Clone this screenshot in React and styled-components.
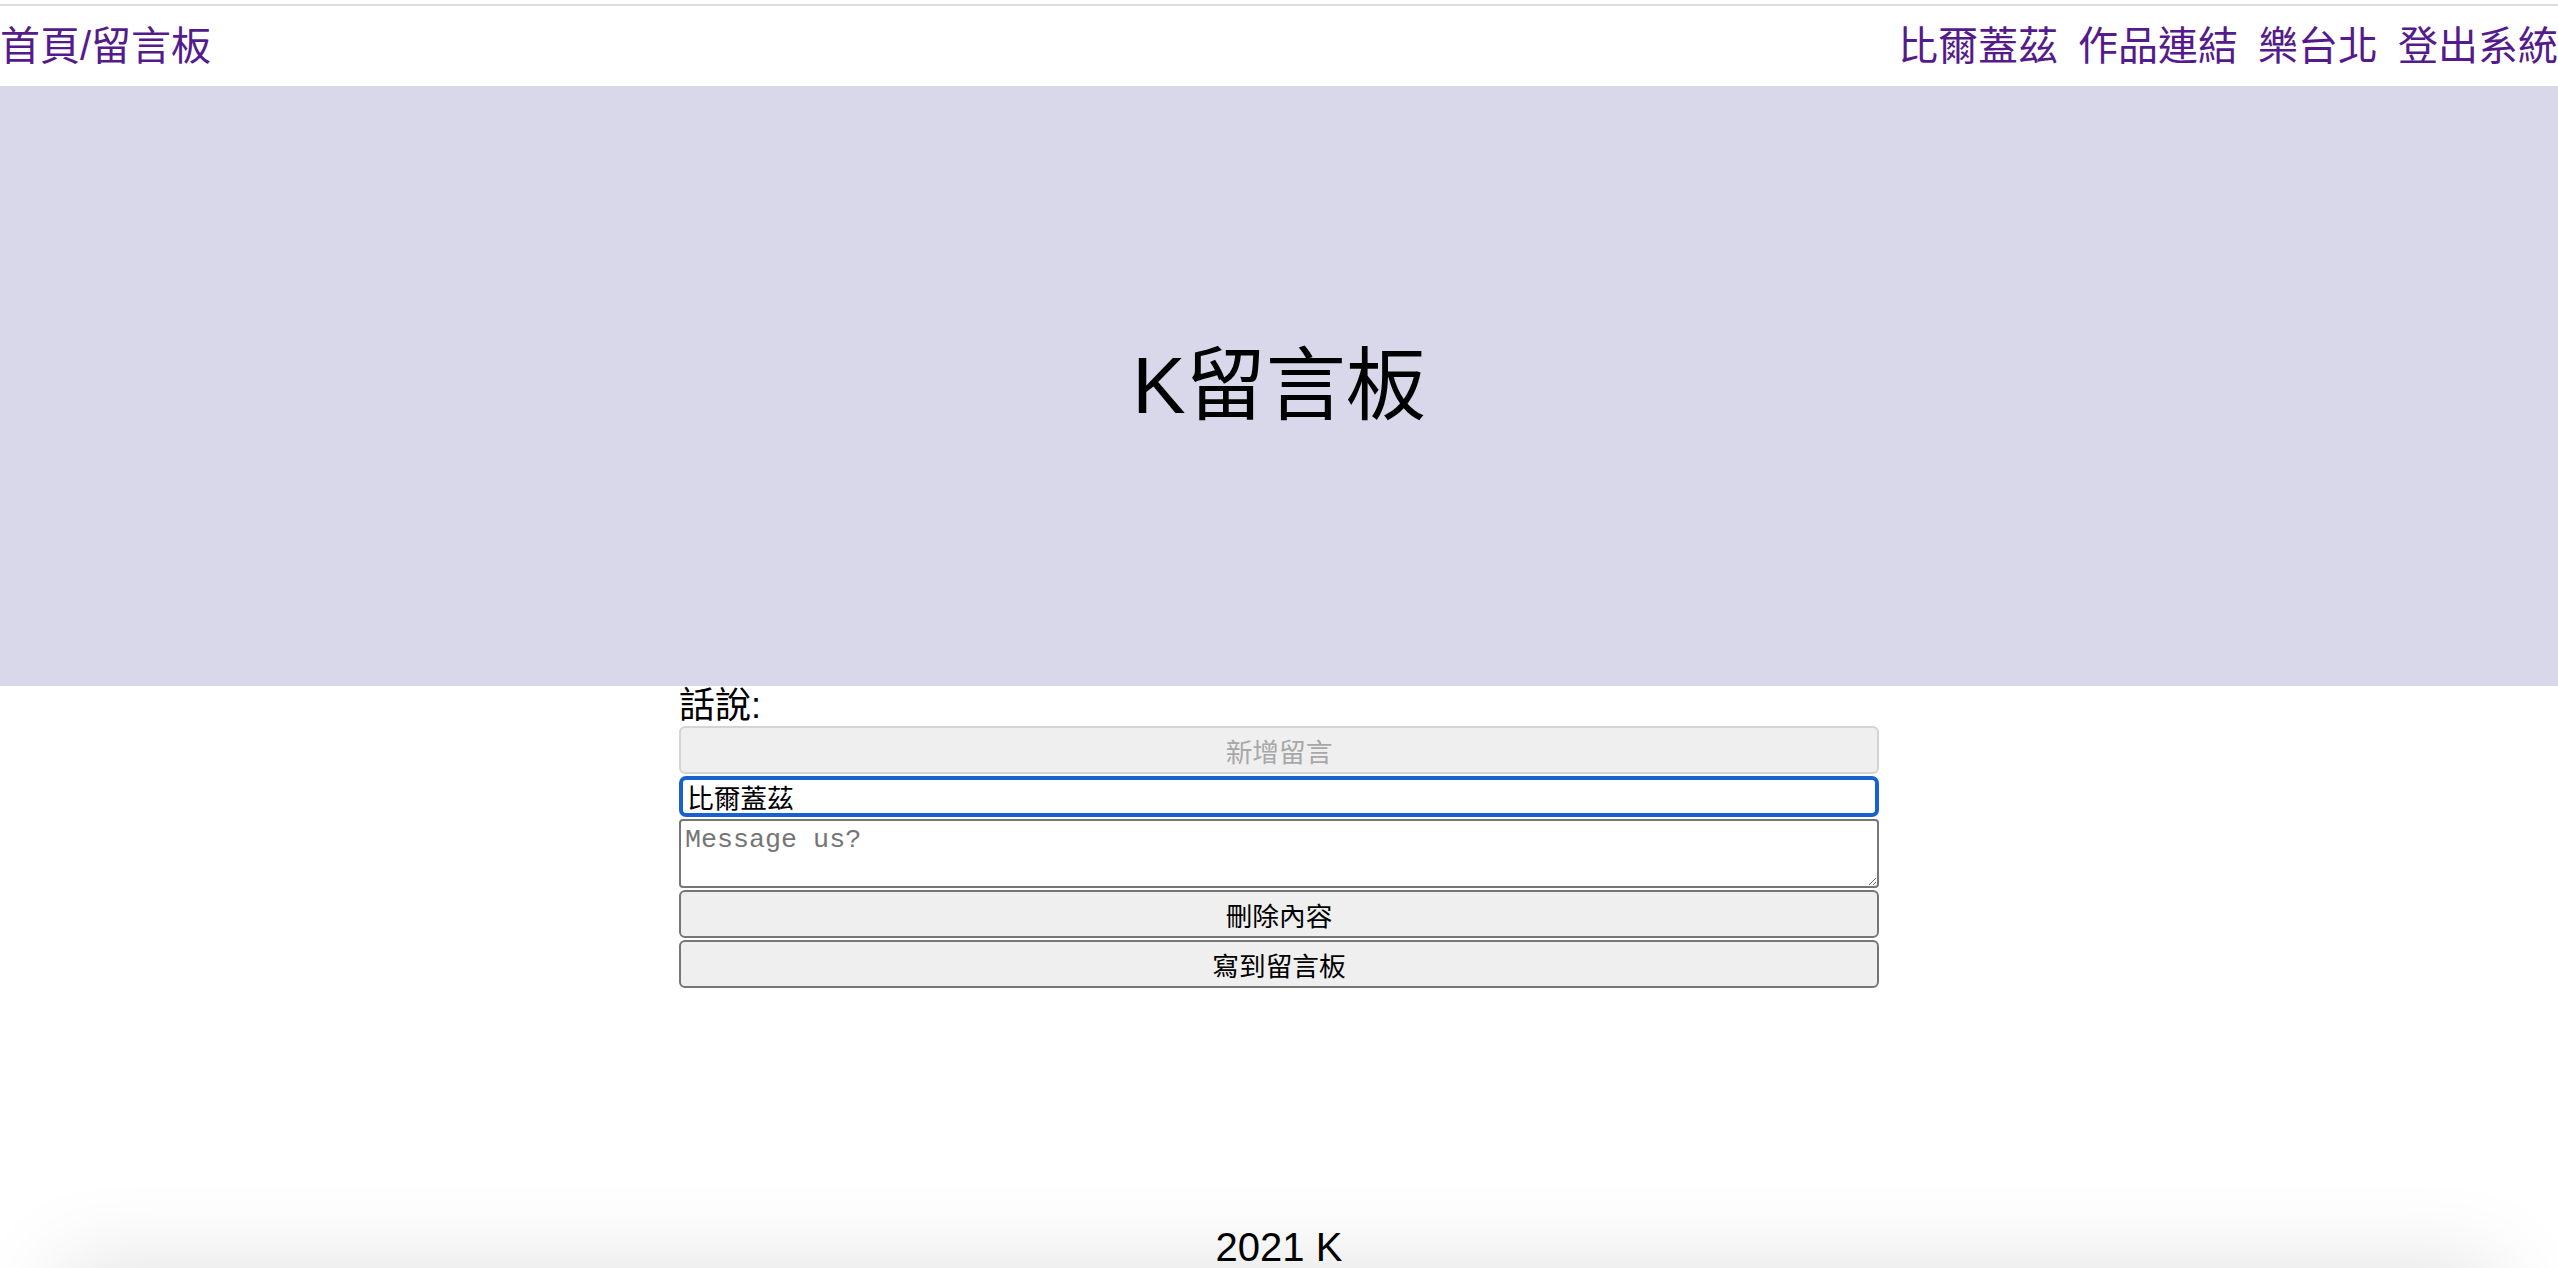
import * as React from 'react';
import styled, { createGlobalStyle } from 'styled-components';

const FONT = `"Liberation Sans", "Noto Sans CJK TC", sans-serif`;

const GlobalStyle = createGlobalStyle`
    html, body {
        margin: 0;
        padding: 0;
        overflow: hidden;
        background: #fff;
    }
    * {
        box-sizing: border-box;
    }
`;

const Page = styled.div`
    display: flex;
    flex-direction: column;
    height: 1268px;
    padding-top: 4px;
    overflow: hidden;
    font-family: ${FONT};
`;

const Header = styled.header`
    display: flex;
    justify-content: space-between;
    align-items: center;
    height: 82px;
    border-top: 2px solid #dcdcdc;
`;

const NavGroup = styled.nav`
    display: flex;
    gap: 20px;
`;

const NavLink = styled.a`
    color: #551a8b;
    font-size: 40px;
    line-height: 48px;
    text-decoration: none;
    white-space: nowrap;
`;

const Hero = styled.section`
    display: flex;
    align-items: center;
    justify-content: center;
    height: 600px;
    background: #d8d8ea;
`;

const Title = styled.h1`
    margin: 0;
    font-size: 80px;
    font-weight: 400;
    line-height: 96px;
    color: #000;
`;

const Form = styled.form`
    display: flex;
    flex-direction: column;
    gap: 2px;
    width: 1200px;
    margin: 0 auto;
`;

const Label = styled.label`
    height: 38px;
    font-size: 36px;
    line-height: 40px;
    color: #000;
`;

const Button = styled.button`
    height: 48px;
    padding: 0;
    font-family: ${FONT};
    font-size: 26.7px;
    color: ${(p) => (p.disabled ? '#a8a8a8' : '#000')};
    background: #efefef;
    border: 2px solid ${(p) => (p.disabled ? '#d4d4d4' : '#767676')};
    border-radius: 6px;
`;

const NameInput = styled.input`
    height: 41px;
    padding: 0 4px;
    font-family: ${FONT};
    font-size: 26.7px;
    color: #000;
    background: #fff;
    border: 4px solid #1862d0;
    border-radius: 7px;
    outline: none;
`;

const MessageBox = styled.textarea`
    height: 69px;
    padding: 4px 4px;
    font-family: "Liberation Mono", monospace;
    font-size: 26.7px;
    line-height: 30px;
    border: 2px solid #767676;
    border-radius: 4px;
    resize: vertical;

    &::placeholder {
        color: #757575;
    }
`;

const Spacer = styled.div`
    flex: 1;
`;

const Footer = styled.footer`
    position: relative;
    z-index: 0;
    display: flex;
    align-items: flex-end;
    justify-content: center;
    height: 80px;
    padding-bottom: 2px;
    flex-shrink: 0;

    /* soft shadow rising from below the fold */
    &::after {
        content: '';
        position: absolute;
        z-index: -1;
        top: 100%;
        left: 60px;
        right: 60px;
        height: 120px;
        box-shadow: 0 0 90px rgba(0, 0, 0, 0.13);
    }
`;

const FooterText = styled.span`
    font-size: 40px;
    line-height: 38px;
    color: #000;
`;

export default function App() {
    return (
        <>
            <GlobalStyle />
            <Page>
                <Header>
                    <NavLink href="#">首頁/留言板</NavLink>
                    <NavGroup>
                        <NavLink href="#">比爾蓋茲</NavLink>
                        <NavLink href="#">作品連結</NavLink>
                        <NavLink href="#">樂台北</NavLink>
                        <NavLink href="#">登出系統</NavLink>
                    </NavGroup>
                </Header>
                <Hero>
                    <Title>K留言板</Title>
                </Hero>
                <Form onSubmit={(e) => e.preventDefault()}>
                    <Label>話說:</Label>
                    <Button type="button" disabled>
                        新增留言
                    </Button>
                    <NameInput defaultValue="比爾蓋茲" />
                    <MessageBox placeholder="Message us?" />
                    <Button type="reset">刪除內容</Button>
                    <Button type="submit">寫到留言板</Button>
                </Form>
                <Spacer />
                <Footer>
                    <FooterText>2021 K</FooterText>
                </Footer>
            </Page>
        </>
    );
}
